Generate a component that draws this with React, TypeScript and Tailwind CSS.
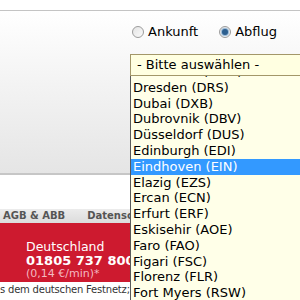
const airports = [
  "Dortmund (DTM)",
  "Dresden (DRS)",
  "Dubai (DXB)",
  "Dubrovnik (DBV)",
  "Düsseldorf (DUS)",
  "Edinburgh (EDI)",
  "Eindhoven (EIN)",
  "Elazig (EZS)",
  "Ercan (ECN)",
  "Erfurt (ERF)",
  "Eskisehir (AOE)",
  "Faro (FAO)",
  "Figari (FSC)",
  "Florenz (FLR)",
  "Fort Myers (RSW)",
  "Frankfurt (FRA)",
];

const Radio = ({ checked }: { checked?: boolean }) => (
  <span className="w-[12px] h-[12px] rounded-full border border-[#9c9c9c] bg-gradient-to-br from-[#e4e4e4] to-[#fafafa] flex items-center justify-center">
    {checked && <span className="w-[6px] h-[6px] rounded-full bg-[#2d5f8f] shadow-[0_0_1px_1px_#8fb3d4]" />}
  </span>
);

export default function App() {
  return (
    <div className="relative w-[300px] h-[300px] overflow-hidden bg-white font-['DejaVu_Sans',Verdana,sans-serif] text-[13px] text-black">
      <div className="h-[10px]" />
      <div className="h-[1px] bg-[#c4c4c4]" />
      <div className="h-[164px] bg-gradient-to-b from-white to-[#e5e5e5] border-b-2 border-[#c6c6c6] pl-[132px] pt-[13px]">
        <div className="flex items-center h-[16px]">
          <Radio />
          <span className="ml-[4px] leading-[16px]">Ankunft</span>
          <span className="ml-[21px]"><Radio checked /></span>
          <span className="ml-[4px] leading-[16px]">Abflug</span>
        </div>
        <div className="mt-[14px] -ml-[2px] w-[175px] h-[22px] border border-[#a39769] bg-[#ffffe1] pl-[6px] leading-[20px] whitespace-nowrap overflow-hidden">
          - Bitte auswählen -
        </div>
      </div>
      <div className="h-[34px]" />
      <div className="h-[14px] bg-gradient-to-b from-[#ececec] to-[#dcdcdc] flex items-center pl-[3px] text-[10px] font-bold text-[#555] leading-[14px] whitespace-nowrap">
        <span>AGB &amp; ABB</span>
        <span className="ml-[22px]">Datenschutz</span>
      </div>
      <div className="h-[59px] bg-[#cd1a2f] pl-[26px] pt-[17px] text-white whitespace-nowrap">
        <div className="text-[12.5px] leading-[14px]">Deutschland</div>
        <div className="text-[13px] font-bold leading-[14px]">01805 737 800</div>
        <div className="text-[11px] leading-[12px] text-[#f3b9c0]">(0,14 €/min)*</div>
      </div>
      <div className="text-[10px] tracking-[-0.2px] leading-[16px] text-[#333] whitespace-nowrap">s dem deutschen Festnetz;</div>

      <div className="absolute left-[130px] top-[76px] w-[180px] h-[230px] overflow-hidden border-l border-[#5a5a5a] bg-[#ffffe8]">
        <div className="-mt-[12px]">
          {airports.map((a) => (
            <div
              key={a}
              className={
                a === "Eindhoven (EIN)"
                  ? "h-[15.8px] leading-[15.8px] pl-[2px] bg-[#3399ff] text-white whitespace-nowrap"
                  : "h-[15.8px] leading-[15.8px] pl-[2px] whitespace-nowrap"
              }
            >
              {a}
            </div>
          ))}
        </div>
      </div>
    </div>
  );
}
